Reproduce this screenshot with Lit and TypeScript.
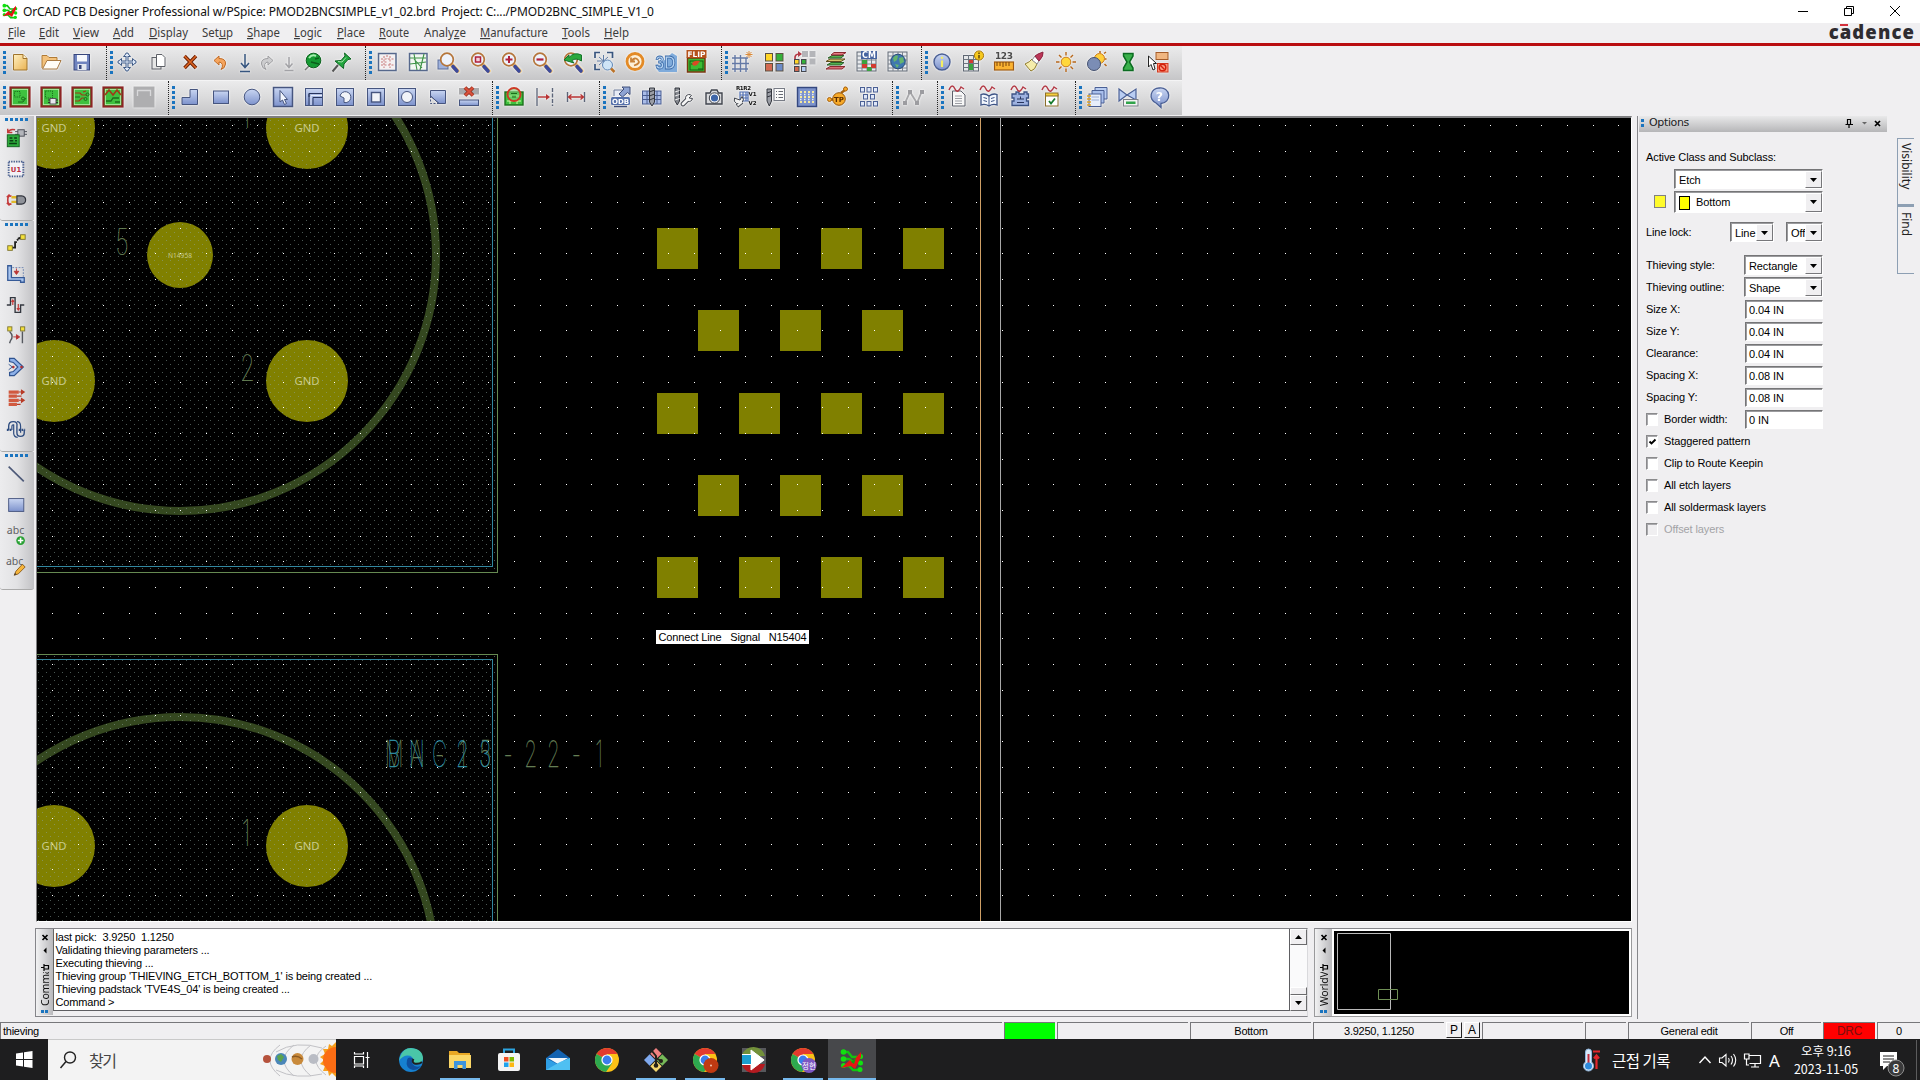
import { LitElement, html, css, svg, SVGTemplateResult } from "lit";
import { customElement } from "lit/decorators.js";

type Frag = SVGTemplateResult;

const lens = (inner: Frag): Frag => svg`
  <path d="M14.5 14.5L20.5 21" stroke="#f6c877" stroke-width="4.4" stroke-linecap="round"/>
  <path d="M16 16.5L20 21" stroke="#3c4a9c" stroke-width="3.6" stroke-linecap="round"/>
  <circle cx="10" cy="9.5" r="6.3" fill="#eef3fc" stroke="#b5763c" stroke-width="1.700"/>
  ${inner}`;
const board = (inner: Frag): Frag => svg`
  <rect x="2.500" y="2.500" width="19" height="19" fill="#3fc13f" stroke="#8c2424" stroke-width="2.200"/>
  <rect x="4.400" y="4.400" width="15.200" height="15.200" fill="none" stroke="#b9ecb0" stroke-width=".8"/>${inner}`;
const wave = svg`<path d="M3 5C5 0 7 0 9 4S13 6 15 2L18 4" fill="none" stroke="#b33a46" stroke-width="1.500"/>`;
const table = svg`<rect x="2" y="2" width="19" height="19" fill="#e9ebee" stroke="#5e6672"/>
  <path d="M2 6H21M2 10H21M2 14H21M2 18H21M7 2V21M12 2V21M16.500 2V21" stroke="#7c848e"/>`;
const chrome = svg`<circle cx="12" cy="12" r="12" fill="#fbc116"/>
  <path d="M12 12L1.600 6A12 12 0 0 1 22.400 6H12Z" fill="#e33b2e"/>
  <path d="M12 12L1.600 6A12 12 0 0 0 11 24L17.200 15Z" fill="#2da94f"/>
  <circle cx="12" cy="12" r="5.600" fill="#fff"/><circle cx="12" cy="12" r="4.400" fill="#3b7ded"/>`;
const orcad = svg`<path d="M3 4H8L12 9H21M3 11H9L13 14H20M3 18H9L13 22H20" fill="none" stroke="#12c312" stroke-width="2.400"/>
  <g fill="#10e210"><circle cx="3.500" cy="4" r="2.800"/><circle cx="3.500" cy="11" r="2.800"/><circle cx="3.500" cy="17.500" r="2.500"/><circle cx="20.500" cy="8.500" r="2.500"/><circle cx="20.500" cy="15" r="2.500"/><circle cx="20" cy="21.500" r="2.500"/></g>
  <path d="M1 20L10 12L12 14L21 4V9L15 21L11 18Z" fill="#e81414"/><path d="M11 14L16 10L14 16Z" fill="#0ca30c"/>`;

const ICONS: Record<string, Frag> = {
  newf: svg`<path d="M5.500 4.500H15L19 8.500V20H5.500Z" fill="url(#gy)" stroke="#a0742c"/><path d="M15 4.500V8.500H19" fill="#fff3d0" stroke="#a0742c"/>`,
  open: svg`<path d="M3 18V5.500H8L10 7.500H18V11" fill="#f3c27c" stroke="#b07a35"/><path d="M3.500 19L8 10.500H22L18 19Z" fill="#fffdf8" stroke="#a87a45"/>`,
  save: svg`<rect x="4" y="4.500" width="15.500" height="15.500" fill="#6f83bf" stroke="#36457b"/><rect x="7" y="5" width="10" height="6.500" fill="#f6f8fc"/><rect x="7.500" y="14" width="9" height="6" fill="#e3e7ef"/><rect x="9" y="15" width="2.500" height="4" fill="#36457b"/>`,
  move: svg`<path d="M12 3V21M3 12H21" stroke="#3e5a86" stroke-width="3"/><path d="M12 2.500L15.500 6.500H8.500ZM12 21.500L8.500 17.500H15.500ZM2.500 12L6.500 8.500V15.500ZM21.500 12L17.500 15.500V8.500Z" fill="#dfe9f8" stroke="#3e5a86"/><path d="M12 5V19M5 12H19" stroke="#dfe9f8"/>`,
  copy: svg`<rect x="5" y="7.500" width="9" height="11.500" fill="#e6e6e6" stroke="#5c5f66"/><path d="M9.500 4.500H15L18 7.500V16.500H9.500Z" fill="#fff" stroke="#5c5f66"/>`,
  del: svg`<path d="M6.500 6L18 18M18 6L6.500 18" stroke="#6b2208" stroke-width="3.600"/><path d="M6.500 6L18 18M18 6L6.500 18" stroke="#dd6320" stroke-width="1.600"/>`,
  undo: svg`<path d="M6 10.500L11 6V8.500Q18 8.500 17.500 14Q17 18.500 13 19.500Q15 17 14.300 14.500Q13.500 12 11 12V15Z" fill="#f5a55e" stroke="#c06a24"/>`,
  down: svg`<path d="M12 4V17M8 13L12 17.500L16 13M7 21.500H17" fill="none" stroke="#36557f" stroke-width="1.500"/>`,
  redo: svg`<path d="M18 10.500L13 6V8.500Q6 8.500 6.500 14Q7 18.500 11 19.500Q9 17 9.700 14.500Q10.500 12 13 12V15Z" fill="#cdcdcf" stroke="#9d9da0"/>`,
  downg: svg`<path d="M12 7V17M8.500 13.500L12 17.500L15.500 13.500M7.500 20.500H16.500" fill="none" stroke="#a2a2a6" stroke-width="1.500"/>`,
  ball: svg`<path d="M8 16L4 20" stroke="#777" stroke-width="1.500"/><circle cx="12.500" cy="10.500" r="7.300" fill="#159a33" stroke="#0a5e1b"/><path d="M8 8Q11 4 15 6" stroke="#a4efae" stroke-width="2" fill="none"/><path d="M10 12L18 14M14 9L18 8" stroke="#0a5e1b" stroke-width="1.500"/>`,
  pin: svg`<path d="M8 15L2.500 21.500" stroke="#555" stroke-width="2"/><path d="M5 11L11 10.500L15 6L14.500 3L21 9L18 9.500L14 14L13.500 18.500Z" fill="#23a63f" stroke="#0b6220"/><path d="M8 11.500L12 12L16 7.500" stroke="#a3e3a9" fill="none"/>`,
  ratsr: svg`<rect x="3.500" y="3.500" width="17.500" height="17" fill="#f4f1f2" stroke="#56688c" stroke-width="1.500"/><path d="M6 9H19M6 15H19M9 6V18M15 6V18M6 12H12M12 5V9" stroke="#c87878" stroke-dasharray="2 1.500"/>`,
  ratsg: svg`<rect x="3.500" y="3.500" width="17.500" height="17" fill="#f2f7f2" stroke="#56688c" stroke-width="1.500"/><path d="M4 8H20M4 14L20 12M8 4L11 20M14 20L18 4M8 9L16 18" stroke="#3e9347" stroke-width="1.100"/>`,
  zwin: svg`<rect x="1" y="10" width="10" height="9" fill="#9fb2dd" stroke="#5a6c99"/>${lens(svg``)}`,
  zrect: lens(svg`<rect x="7.500" y="7" width="5" height="5" fill="#f3d0d8" stroke="#b0203c" stroke-width="1.500"/>`),
  zin: lens(svg`<path d="M10 6V13M6.500 9.500H13.500" stroke="#b0203c" stroke-width="2"/>`),
  zout: lens(svg`<path d="M6.500 9.500H13.500" stroke="#b0203c" stroke-width="2.200"/>`),
  zprev: svg`${lens(svg``)}<path d="M3 10L8 5V7.500Q13 1.500 20.500 5V11Q15 7.500 11 10.500L13 13Z" fill="#2ba83d" stroke="#14732a"/>`,
  zsel: svg`<path d="M3 8V2.500H8M15 2.500H20.500V8M3 14V19.500H8" fill="none" stroke="#38557f" stroke-width="1.700"/><path d="M5 11H18M11.500 5V17M7 7L16 15M16 7L7 15" stroke="#5f7ba5"/><circle cx="15.500" cy="15" r="5" fill="#cfe4f6" stroke="#5f86b5"/><path d="M19 18.500L22.500 22" stroke="#bb7228" stroke-width="2.500"/>`,
  refresh: svg`<circle cx="12" cy="11.500" r="8" fill="#fdf0d8" stroke="#e38a26" stroke-width="2.800"/><path d="M8 7.500V11.500H12M8.500 11Q12 6.500 15 10T11 15.500" fill="none" stroke="#c98238" stroke-width="1.800"/>`,
  d3: svg`<path d="M18 3L23 6V22H5L2 18Z" fill="#7fabdb"/><text x="11.500" y="19" class="t3d" text-anchor="middle" textLength="20" lengthAdjust="spacingAndGlyphs">3D</text>`,
  flip: svg`<rect x="2.500" y="8" width="17.500" height="14" fill="#3cbc32" stroke="#7b3510" stroke-width="1.500"/><rect x="5" y="11" width="13" height="9" fill="none" stroke="#135e13"/><path d="M6 14H11M13 19H18" stroke="#135e13"/><path d="M7 14Q8 10 15 11L12 15L9 16Z" fill="#da4a24"/><rect x="1.500" y="0" width="20" height="8" fill="#b5511a"/><text x="11.500" y="7" class="tiny" fill="#fff" font-size="7.500" text-anchor="middle" textLength="18" lengthAdjust="spacingAndGlyphs">FLIP</text>`,
  grid: svg`<path d="M1 8H17M1 13.500H18M1 19H17M4 5V22M9.500 5V22M15 8V22" stroke="#6378a5" stroke-width="1.400"/><path d="M18 1V8M14.500 4.500H21.500M15.500 2L20.500 7M20.500 2L15.500 7" stroke="#d98a3a"/>`,
  four: svg`<g stroke="#5b5142"><rect x="3.500" y="3.500" width="7" height="7.500" fill="#ffd527"/><rect x="14" y="3.500" width="7" height="7.500" fill="#35b13a"/><rect x="3.500" y="13.500" width="7" height="7.500" fill="#d36a52"/><rect x="14" y="13.500" width="7" height="7.500" fill="#6c8cc8"/></g>`,
  shift: svg`<g fill="#b4b5b9"><rect x="9" y="1" width="6" height="6"/><rect x="16.500" y="1" width="6" height="6"/><rect x="16.500" y="8.500" width="6" height="6"/></g><path d="M2 9Q1.500 4 6 4" stroke="#b33a46" stroke-width="1.700"/><path d="M5 1V7L9 4Z" fill="#b33a46"/><g stroke="#44464d"><rect x="1.500" y="9.500" width="4.500" height="4.500" fill="#ffd527"/><rect x="8.500" y="9.500" width="4.500" height="4.500" fill="#35b13a"/><rect x="1.500" y="16.500" width="4.500" height="5" fill="#d36a52"/><rect x="8.500" y="16.500" width="4.500" height="5" fill="#b4cdf2"/></g>`,
  layers: svg`<path d="M2 19H18L21 16.500H6Z" fill="#d87078" stroke="#8b2930"/><path d="M3 15H17L20 12.500H7Z" fill="#54b24f" stroke="#2a5f2a"/><path d="M2 11.500H17L21 9H6Z" fill="#d8c26a" stroke="#5f4b1e"/><path d="M4 8H17L20 5.500H8Z" fill="#54b24f" stroke="#2a5f2a"/><path d="M7 5H18L22 2.500H10Z" fill="#e87d84" stroke="#8b2930"/>`,
  cm: svg`${table}<rect x="6" y="1" width="16" height="8" fill="#46639f"/><text x="14" y="8" class="tiny" fill="#fff" font-size="8" text-anchor="middle">CM</text><rect x="7" y="10" width="5" height="4" fill="#3aa33e"/><rect x="16" y="14" width="5" height="4" fill="#d23b31"/><rect x="7" y="14" width="5" height="4" fill="#d23b31"/><rect x="12" y="17" width="4.500" height="4" fill="#3aa33e"/>`,
  world: svg`${table}<circle cx="12" cy="11.500" r="7.300" fill="#3f78ae" stroke="#274a78"/><path d="M7 8Q10 4 12 6L11 10L8 12ZM13 8L17 7L18 12L14 14Z" fill="#65b56d"/><path d="M9 14L13 15L11 18Z" fill="#65b56d"/>`,
  info: svg`<circle cx="12" cy="12" r="8" fill="url(#gb)" stroke="#4a5f94" stroke-width="1.400"/><path d="M12 10.500V17M12 6.800V8.800" stroke="#f4ee62" stroke-width="2.200"/>`,
  tinfo: svg`<rect x="2.500" y="5.500" width="15" height="15.500" fill="#e6e8ea" stroke="#5e6672"/><path d="M2.500 9.500H17M2.500 13.500H17M2.500 17.500H17M7.500 5V21M12.500 5V21" stroke="#6d7680"/><rect x="8" y="10" width="4" height="3" fill="#d23b31"/><rect x="8" y="14" width="4" height="6" fill="#3aa33e"/><circle cx="18" cy="5.500" r="4.600" fill="#f6c91f" stroke="#a7770b"/><path d="M18 5V8.500M18 2.500V4" stroke="#5b3f05" stroke-width="1.400"/>`,
  ruler: svg`<text x="12" y="9" class="tiny" fill="#4b4b4b" font-size="9" text-anchor="middle" textLength="18">123</text><rect x="2.500" y="12" width="19" height="8" fill="#fbb331" stroke="#9e5a12" stroke-width="1.200"/><path d="M5 12V16M8 12V16M11 12V17M14 12V16M17 12V16" stroke="#7a430b"/>`,
  brush: svg`<path d="M2 14Q7 12 9 9L14 14Q12 20 8 21Q6 19 2 14Z" fill="#f6ecab" stroke="#8e7a2c"/><path d="M9 10L12 6L16 11L14 14Z" fill="#fff" stroke="#888"/><path d="M12 6Q14 4 20 2Q21 6 16 11Z" fill="#bb3557" stroke="#8c2440"/>`,
  sun: svg`<g stroke="#b7661a" stroke-width="1.400"><path d="M12 2V5.500M12 18.500V22M2 12H5.500M18.500 12H22M5 5L7.500 7.500M16.500 16.500L19 19M5 19L7.500 16.500M16.500 7.500L19 5"/></g><circle cx="12" cy="12" r="4.800" fill="#ffd83c" stroke="#c97a1c"/>`,
  sunsh: svg`<g stroke="#b7661a" stroke-width="1.500"><path d="M15 1V3M21.500 9H19.500M19 3.500L21 2M19.500 14L21.500 16"/></g><circle cx="14.500" cy="8.500" r="5" fill="#ffcf3c" stroke="#c97a1c"/><circle cx="9" cy="14" r="6.500" fill="#7b8db5" stroke="#44506e"/>`,
  hour: svg`<path d="M7.500 3.500H17V6L13.500 12L17 18V20.500H7.500V18L11 12L7.500 6Z" fill="#39b04a" stroke="#0b6b21" stroke-width="1.500"/>`,
  waive: svg`<rect x="9" y="2.500" width="12" height="7" fill="#f0b681" stroke="#a45c2a"/><path d="M1.500 6V17L4 14.500L6 20L8 19L6.500 13.500H9.500Z" fill="#fff" stroke="#222"/><rect x="10.500" y="13.500" width="10.500" height="8.500" fill="#fb9a80" stroke="#d13b21"/><circle cx="15.500" cy="17.500" r="3.300" fill="none" stroke="#d3210d" stroke-width="1.500"/><path d="M13.500 15.500L17.500 19.500" stroke="#d3210d" stroke-width="1.500"/>`,

  b1: board(svg`<rect x="6.500" y="6.500" width="5.500" height="5.500" fill="none" stroke="#1b6e1b" stroke-dasharray="1.200 1"/><path d="M10 17H15L18 13" stroke="#1b6e1b" fill="none"/><circle cx="15" cy="13.500" r="1.500" fill="none" stroke="#1b6e1b"/>`),
  b2: board(svg`<rect x="6.500" y="6" width="7" height="7" fill="none" stroke="#1b6e1b" stroke-dasharray="1.200 1"/><rect x="11" y="13.500" width="6" height="5.500" fill="#e8e8ee" stroke="#555"/><path d="M9 15H11M17 15H19M9 17.500H11M17 17.500H19" stroke="#333"/>`),
  b3: board(svg`<path d="M5 8H10L12 10H17M5 16H9L12 13H14M13 7L16 6" fill="none" stroke="#a03a18" stroke-width="1.200"/><circle cx="17.500" cy="9.500" r="1.500" fill="none" stroke="#1b6e1b"/><circle cx="15.500" cy="14" r="1.500" fill="none" stroke="#1b6e1b"/><path d="M5 12H10" stroke="#1b6e1b"/>`),
  b4: board(svg`<path d="M4 10L8 5L12 10L16 5L20 10" fill="none" stroke="#a03a18" stroke-width="1.600"/><path d="M5 16H10L12 13H18M14 17H19" fill="none" stroke="#1b6e1b" stroke-width="1.300"/>`),
  b5: svg`<rect x="1.500" y="1.500" width="21" height="21" fill="#aeaeb0"/><path d="M5.500 11V5.500H18.500V11" fill="none" stroke="#d9d9db" stroke-width="1.300"/>`,
  sL: svg`<path d="M4 19.500V12.500H12V4.500H19.500V19.500Z" fill="url(#gb)" stroke="#46557f"/>`,
  sRect: svg`<rect x="4.500" y="6" width="15" height="12.500" fill="url(#gb)" stroke="#46557f"/>`,
  sCirc: svg`<circle cx="12" cy="12" r="7.800" fill="url(#gb)" stroke="#46557f"/>`,
  sSel: svg`<rect x="2.500" y="2.500" width="19" height="19" fill="url(#gb)" stroke="#46557f" stroke-width="1.500"/><path d="M9 5.500V17L11.500 15L13.500 19.500L15.500 18.500L13.500 14.500H16.500Z" fill="#f1f5fd" stroke="#46557f"/>`,
  sPath: svg`<rect x="3.500" y="3.500" width="17" height="17" fill="url(#gb)" stroke="#46557f"/><path d="M7 20V8.500H20M11 20V12.500H20M7 12V8.500" fill="none" stroke="#27345c"/><path d="M9 20V10.500H20" fill="none" stroke="#e6ecfa"/>`,
  sPie: svg`<rect x="3.500" y="3.500" width="17" height="17" fill="url(#gb)" stroke="#46557f"/><path d="M7 11A5.500 5.500 0 1 1 11 17.500V13Z" fill="#f1f3f8" stroke="#46557f"/>`,
  sHole: svg`<rect x="3.500" y="3.500" width="17" height="17" fill="url(#gb)" stroke="#46557f"/><rect x="7.500" y="7.500" width="9" height="9.500" fill="#f1f3f8" stroke="#46557f" stroke-width="1.400"/>`,
  sHoleC: svg`<rect x="3.500" y="3.500" width="17" height="17" fill="url(#gb)" stroke="#46557f"/><circle cx="12" cy="12" r="5.500" fill="#f1f3f8" stroke="#46557f"/>`,
  sCut: svg`<path d="M4.500 5.500H19.500V18.500L13 18.500L4.500 11Z" fill="url(#gb)" stroke="#46557f"/><path d="M4.500 11V18.500H13" fill="none" stroke="#46557f" stroke-dasharray="2 1.500"/><path d="M4.500 11L13 18.500" stroke="#46557f"/>`,
  sDel: svg`<rect x="2" y="3" width="20" height="6.500" fill="#aaaaac"/><path d="M8 2.500L16 10.500M16 2.500L8 10.500" stroke="#8c2a1a" stroke-width="3.800"/><path d="M8 2.500L16 10.500M16 2.500L8 10.500" stroke="#d8503a" stroke-width="2.400"/><rect x="2.500" y="15" width="19" height="5.500" fill="url(#gb)" stroke="#46557f"/>`,
  drc: svg`<rect x="3" y="7" width="18" height="13" fill="#3fc13f" stroke="#1b6e1b" stroke-width="1.400"/><path d="M5 11H10M14 11H19M5 16H19M8 14V19M15 14V19" stroke="#d8f5a8"/><circle cx="12" cy="9.500" r="6.500" fill="#7fd078" fill-opacity=".6" stroke="#cc3a26" stroke-width="2"/><path d="M9 8.500H15M10 12H14" stroke="#1b6e1b"/>`,
  dimr: svg`<path d="M4 3V21" stroke="#5b6478" stroke-width="1.300"/><path d="M19.500 3V21" stroke="#5b6478" stroke-width="1.400" stroke-dasharray="4 1.500"/><path d="M5 12H14" stroke="#b83232" stroke-width="1.400"/><path d="M13 9L17 12L13 15Z" fill="#b83232"/>`,
  dim: svg`<path d="M3.500 7V17M20.500 7V17" stroke="#5b6478" stroke-width="1.400"/><path d="M5 12H19M7.500 9.500L4.500 12L7.500 14.500M16.500 9.500L19.500 12L16.500 14.500" fill="none" stroke="#b83232" stroke-width="1.300"/>`,
  odb: svg`<path d="M5 11V5H14V11" fill="#e7ebf5" stroke="#6a7899"/><path d="M10 9L15 4L13 2H21V9.500L18.500 7.500L13.500 12Z" fill="#8fa4d3" stroke="#3d4c78"/><rect x="2" y="12" width="19" height="8" rx="1.500" fill="#5570ab"/><text x="11.500" y="18.800" class="tiny" fill="#fff" font-size="7" text-anchor="middle">ODB</text><path d="M5 21.500H18" stroke="#3d4c78" stroke-width="1.500"/>`,
  drillg: svg`<rect x="2.500" y="6" width="18.500" height="13" fill="#a9bce8" stroke="#4b5f93"/><path d="M2.500 10.500H21M2.500 14.500H21M7 6V19M17 6V19" stroke="#4b5f93"/><path d="M9.500 3H14.500V17L12 21L9.500 17Z" fill="#9b9ea6" stroke="#33363e"/><path d="M9.500 7L14.500 5M9.500 11L14.500 9M9.500 15L14.500 13" stroke="#33363e"/>`,
  drillw: svg`<path d="M4 3H8.500V16L6.300 20L4 16Z" fill="#85888f" stroke="#33363e"/><path d="M4 7L8.500 5.500M4 11L8.500 9.500M4 15L8.500 13.500" stroke="#eee"/><path d="M12 19L17 14" stroke="#43474f" stroke-width="4.600" stroke-linecap="round"/><path d="M20.500 10.500A3.500 3.500 0 1 0 21.500 13.500L18 13Z" fill="#f5f5f5" stroke="#43474f"/><path d="M12 19L17 14" stroke="#f5f5f5" stroke-width="2.800" stroke-linecap="round"/>`,
  cam: svg`<path d="M4 8H8L9.500 5H15L16.500 8H20V19H4Z" fill="#d9dadd" stroke="#3f434c" stroke-width="1.400"/><circle cx="12.500" cy="13" r="4.300" fill="#3f66a8" stroke="#fff" stroke-width="1.400"/><circle cx="12.500" cy="13" r="5.200" fill="none" stroke="#3f434c"/>`,
  r1r2: svg`<path d="M7 7H15V16H7ZM10 7V16M13 7V16M7 10H15M7 13H15" fill="none" stroke="#5271b5" stroke-width="1.200"/><path d="M4 21L9 17" stroke="#43474f" stroke-width="4"/><path d="M1.500 13A4.500 4.500 0 1 0 9 11.500L7 15L4 14Z" fill="#f1f1f1" stroke="#43474f"/><path d="M4.500 20.500L9 17" stroke="#eee" stroke-width="2"/><text class="tiny" fill="#111" x="3" y="4.500" font-size="5.500" textLength="15">R1R2</text><text class="tiny" fill="#111" x="15.500" y="11" font-size="5.500">V1</text><text class="tiny" fill="#111" x="15.500" y="19.500" font-size="5.500">V2</text>`,
  drilll: svg`<path d="M3 4H7.500V16L5.300 21L3 16Z" fill="#9b9ea6" stroke="#33363e"/><path d="M3 8L7.500 6.500M3 12L7.500 10.500" stroke="#33363e"/><rect x="10" y="3.500" width="10.500" height="12" fill="#fbfbfb" stroke="#777b85"/><path d="M12 6.500H13M14.500 6.500H19M12 9.500H13M14.500 9.500H19M12 12.500H13M14.500 12.500H19" stroke="#666a73"/>`,
  dots: svg`<rect x="2.500" y="2.500" width="19" height="19" fill="#7d93cc" stroke="#35487f" stroke-width="1.500"/><path d="M5 7H19M5 12H19M5 17H19" stroke="#f5e9a0" stroke-width="2" stroke-dasharray="2 2"/><path d="M5 9.500H19M5 14.500H19" stroke="#e8eefb" stroke-width="1.500" stroke-dasharray="1.500 2.500"/>`,
  tp: svg`<path d="M3 14.500H8M15 8L19 5L20 2" stroke="#a8620e" stroke-width="2.400" fill="none"/><circle cx="3.500" cy="14.500" r="2" fill="#f7a928" stroke="#a8620e"/><circle cx="19.500" cy="4" r="2" fill="#f7a928" stroke="#a8620e"/><circle cx="13" cy="14" r="6.300" fill="#f7a928" stroke="#8f520b"/><text x="13" y="16.600" class="tiny" font-size="7" text-anchor="middle" fill="#5b2e00">TP</text>`,
  pads: svg`<g fill="#dfe7f8" stroke="#4a5f94"><rect x="3.500" y="2.500" width="4" height="4.500"/><rect x="10" y="2.500" width="4" height="4.500"/><rect x="16.500" y="2.500" width="4" height="4.500"/><rect x="6.500" y="9.500" width="4" height="4.500"/><rect x="13.500" y="9.500" width="4" height="4.500"/><rect x="3.500" y="16.500" width="4" height="4.500"/><rect x="10" y="16.500" width="4" height="4.500"/><rect x="16.500" y="16.500" width="4" height="4.500"/></g>`,
  netg: svg`<path d="M3 18L8 7L15 18L20 6" fill="none" stroke="#a7a7aa" stroke-width="1.800"/><g fill="#9c9ca0"><rect x="1" y="16" width="4" height="4"/><rect x="6" y="5" width="4" height="4"/><rect x="13" y="16" width="4" height="4"/><rect x="18" y="5" width="4" height="4"/></g>`,
  rep1: svg`<path d="M6.500 6H15L19 10V21H6.500Z" fill="#f8f8f8" stroke="#5d616b"/><path d="M9 11H16M9 13.500H16M9 16H16M9 18.500H16" stroke="#9c9ea4"/>${wave}`,
  rep2: svg`<path d="M4 9.500Q8 8 12 11Q16 8 20 9.500V20Q16 18.500 12 21Q8 18.500 4 20Z" fill="#f2f6fd" stroke="#3c5385" stroke-width="1.300"/><path d="M12 11V21M6.500 12.500L10 13.500M6.500 15.500L10 16.500M14 13.500L17.500 12.500M14 16.500L17.500 15.500" stroke="#3c5385"/>${wave}`,
  rep3: svg`<path d="M4 9H8V7H11V9H16V7H19V9H20.500V13H18.500V16H20.500V20.500H4V16H6V13H4Z" fill="#9eb2e0" stroke="#3c5385" stroke-width="1.300"/><path d="M9 14H16M12.500 11.500V14M9 17.500H16" stroke="#27345c"/>${wave}`,
  rep4: svg`<rect x="6.500" y="9.500" width="12.500" height="11.500" fill="#fff" stroke="#8b6f2a"/><rect x="6.500" y="8" width="12.500" height="3" fill="#f5cf3d" stroke="#8b6f2a"/><path d="M10 16L12 18.500L16 13.500" fill="none" stroke="#167a2b" stroke-width="1.800"/>${wave}`,
  books: svg`<path d="M10 2.500H22V14H10Z" fill="#b9cdf2" stroke="#4a5f94"/><path d="M7 5.500H19V18H7Z" fill="#a9bfec" stroke="#4a5f94"/><rect x="4" y="9" width="12" height="12.500" fill="#e7eefb" stroke="#4a5f94"/><path d="M6.500 12H14M6.500 15H14" stroke="#9eafd6"/><path d="M2 11H6M2 14H6M2 17H6M2 20H6" stroke="#e0a325" stroke-width="1.600"/>`,
  bow: svg`<path d="M3 4L11 10L20 4V15L11 10L3 16Z" fill="#b9cdf2" stroke="#4a5f94" stroke-width="1.200"/><rect x="7.500" y="14.500" width="14.500" height="6.500" fill="#f3f3f3" stroke="#7b7e86"/><rect x="10" y="16.500" width="9.500" height="2.500" fill="#31a44a"/>`,
  help: svg`<path d="M12.500 3A8 7.800 0 1 1 14 18.500L14 22.500L9 18A8 7.800 0 0 1 12.500 3Z" fill="url(#gb)" stroke="#4a5f94" stroke-width="1.300"/><text x="12.300" y="15.500" class="tiny" font-size="12.500" text-anchor="middle" fill="#fff">?</text>`,

  l1: svg`<path d="M8 6L3 6V2M3 6Q5 1.500 11 3" fill="none" stroke="#c43a3a" stroke-width="1.600"/><rect x="14" y="3" width="7" height="7" fill="#b3b5bb" stroke="#484b55"/><path d="M11 5H14M11 8H14M21 5H24M21 8H24" stroke="#484b55"/><rect x="2.500" y="8.500" width="13" height="13" fill="#2dab3c" stroke="#135e1f"/><path d="M5 12H8M10 12H13M5 15H9M11 15H13M4.500 18H13" stroke="#0b3f12" stroke-width="1.500"/>`,
  l2: svg`<rect x="5" y="5" width="14" height="14" fill="#f1f1f6"/><rect x="4" y="4" width="16" height="16" fill="none" stroke="#42598c" stroke-width="2" stroke-dasharray="1.400 1.300"/><text x="12" y="15" class="tiny" font-size="7.500" fill="#bb2c3c" text-anchor="middle">U1</text>`,
  l3: svg`<path d="M7 8Q3 6 3 12T7 16M2 9L5 6M2 15L5 18" fill="none" stroke="#c43a3a" stroke-width="1.800"/><path d="M7 9H13M7 14H13" stroke="#e0b82a" stroke-width="2.500"/><path d="M13 7.500H18Q22.500 8 22.500 12T18 16.500H13Z" fill="#8f9299" stroke="#2f323b" stroke-width="1.300"/>`,
  l4: svg`<path d="M6 17H11V11H13M14 7H19" stroke="#222" stroke-width="2" fill="none"/><path d="M13 9L17 6" stroke="#222" stroke-width="2" stroke-dasharray="2 1"/><rect x="3" y="15" width="5" height="5" fill="#f4e13a" stroke="#7d7430"/><rect x="17" y="3" width="5" height="5" fill="#f4e13a" stroke="#7d7430"/>`,
  l5: svg`<path d="M3 3H7V16H21V21H17V19H3Z" fill="#a9c6f0" stroke="#365a97" stroke-width="1.400"/><path d="M8 5H20V15" fill="none" stroke="#6f86b1" stroke-dasharray="2 1.400"/><path d="M12.500 6V9M10 9H15L12.500 12.500Z" fill="#b83232" stroke="#b83232"/>`,
  l6: svg`<path d="M2 12H6V4H11V20H17V12H21" fill="none" stroke="#33373f" stroke-width="1.500"/><path d="M8.500 12V7M7 8.500L8.500 6.500L10 8.500M14.500 11V17M13 15.500L14.500 17.500L16 15.500" stroke="#c43a3a" stroke-width="1.300" fill="none"/>`,
  l7: svg`<path d="M5 7Q10 12 6 17L5 20M19 7V20" fill="none" stroke="#55585f" stroke-width="1.500"/><path d="M9 13H14M12.500 10.500L16 13L12.500 15.500Z" fill="#b83232" stroke="#b83232"/><rect x="3" y="2" width="4.500" height="4.500" fill="#f4e13a" stroke="#7d7430"/><rect x="17" y="2" width="4.500" height="4.500" fill="#f4e13a" stroke="#7d7430"/>`,
  l8: svg`<path d="M5 2.500H10L20 12L10 21.500H5V18L9 17L14 12L9 7L5 6Z" fill="#8db1e9" stroke="#2f5390" stroke-width="1.300"/><circle cx="9" cy="12" r="1.500" fill="#b83232"/><circle cx="18" cy="12" r="1.500" fill="#b83232"/><path d="M4 9L8 12L4 15" stroke="#2f5390" fill="none"/>`,
  l9: svg`<path d="M4 5.500H15M4 10H13M4 14.500H15M4 19H13" stroke="#d1593f" stroke-width="3.600"/><path d="M15 5.500H20M13 10H18M15 14.500H20M13 19H17M18 3.500L21 5.500L18 7.500ZM18 12.500L21 14.500L18 16.500Z" stroke="#b83a26" stroke-width="1.200" fill="#b83a26"/>`,
  l10: svg`<path d="M4 13V9Q4 4 9 4T13 9V16Q13 20 17 20T21 16V13" fill="none" stroke="#2f4d80" stroke-width="1.500"/><path d="M7.500 13V10Q7.500 7 9.500 7.500V17Q10 21 14 21" fill="none" stroke="#2f4d80" stroke-width="1.300"/><path d="M13 4Q17 4 17 9V16" fill="none" stroke="#2f4d80" stroke-width="1.300"/><path d="M2 13H8M15 13H22" stroke="#2f4d80" stroke-width="2.500" stroke-dasharray="2 1"/>`,
  l11: svg`<path d="M4 4L20.500 20" stroke="#4d5978" stroke-width="1.800"/>`,
  l12: svg`<rect x="4" y="5" width="16.500" height="14" fill="url(#gb)" stroke="#46557f"/>`,
  l13: svg`<text x="11.500" y="10" class="abc" text-anchor="middle">abc</text><circle cx="17" cy="17" r="4.700" fill="#28a033"/><path d="M17 14V20M14 17H20" stroke="#fff" stroke-width="1.700"/>`,
  l14: svg`<text x="10.500" y="10" class="abc" text-anchor="middle">abc</text><path d="M10 21L12 16.500L19 9L22 12L14.500 19.500Z" fill="#f6b53a" stroke="#8b5c1c"/><path d="M10 21L11 18.500L12.500 20Z" fill="#333"/>`,
  orcad,
  edge: svg`<circle cx="12" cy="12" r="12" fill="#1680d0"/><path d="M1 9Q4 0 12 0Q24 1 24 11Q23 16 17 15.500Q14 15 14.500 13Q14 7 8 7.500Q3 8 0 13Z" fill="#4ac6a8"/><path d="M8 12Q6 20 14 22Q19 22 22 18Q16 20 13.500 16Q12 13 14 10.500Q9 8 8 12Z" fill="#0f4f9e"/><path d="M14.500 11Q12.500 14 15.500 15.500Q20 16.500 23 14" fill="none" stroke="#1f1f1f" stroke-width="2"/>`,
  folder: svg`<path d="M1 3H9L11 5H22V20H1Z" fill="#e9a825"/><path d="M1 7H23V20H1Z" fill="#fbd767"/><path d="M6 21V13H18V21H14.500V17H9.500V21Z" fill="#3d94dd"/>`,
  store: svg`<path d="M7 6V1.500H17V6" fill="none" stroke="#2ca4e0" stroke-width="2"/><rect x="1" y="5" width="22" height="18" rx="2" fill="#f4f4f4"/><rect x="7" y="9" width="4.500" height="4.500" fill="#ee5024"/><rect x="12.500" y="9" width="4.500" height="4.500" fill="#7fb900"/><rect x="7" y="14.500" width="4.500" height="4.500" fill="#1fa3ed"/><rect x="12.500" y="14.500" width="4.500" height="4.500" fill="#fdb813"/>`,
  mail: svg`<path d="M0 10L12 1L24 10V22H0Z" fill="#1463b0"/><path d="M2 10H22L12 16Z" fill="#f3f8fc"/><path d="M0 10L12 16.500L24 10V22H0Z" fill="#2f9fe5"/><path d="M0 22L14 14L24 10V22Z" fill="#4fc0f2"/>`,
  chrome,
  git: svg`<g transform="rotate(45 12 12)"><rect x="3.500" y="3.500" width="8" height="8" fill="#f08080"/><rect x="12.500" y="3.500" width="8" height="8" fill="#76b958"/><rect x="3.500" y="12.500" width="8" height="8" fill="#7fa9ee"/><rect x="12.500" y="12.500" width="8" height="8" fill="#f5d76e"/></g><path d="M8 3L12 8V17M12 10L17 13" stroke="#242018" stroke-width="2" fill="none"/><circle cx="12" cy="17.500" r="2.300" fill="#242018"/><circle cx="17" cy="13" r="2" fill="#242018"/>`,
  chromer: svg`${chrome}<circle cx="18" cy="17.500" r="7.500" fill="#c03a12"/><circle cx="18" cy="17.500" r="1" fill="#f2c6b4"/>`,
  chromep: svg`${chrome}<circle cx="18" cy="17.500" r="7.500" fill="#7d57c2"/><text x="18" y="20.500" font-family="Noto Sans CJK KR" font-size="7.500" text-anchor="middle" fill="#fff">정현</text>`,
  play: svg`<rect width="24" height="24" fill="#57585c"/><path d="M0 7A12 12 0 0 1 23 8H0Z" fill="#72903a"/><path d="M0 17A12 12 0 0 0 23 16H0Z" fill="#b51a20"/><rect y="7" width="9" height="9" fill="#1b9fd0"/><path d="M0 6.500H9V2L22 12L9 22V16.500H0" fill="none" stroke="#fff"/><path d="M9 2L22.500 12L9 22Z" fill="#fff"/>`,
};

interface Group { w: number; pad: number; items: (string | [string, number])[]; }
const ROW1: Group[] = [
  { w: 106, pad: 4, items: ["newf", "open", "save"] },
  { w: 259, pad: 4, items: [["move", 32], ["copy", 31], ["del", 31], ["undo", 30], ["down", 20], ["redo", 24], ["downg", 20], ["ball", 28], ["pin", 30]] },
  { w: 356, pad: 5.5, items: ["ratsr", "ratsg", "zwin", "zrect", "zin", "zout", "zprev", "zsel", "refresh", "d3", "flip"] },
  { w: 200, pad: 5, items: ["grid", "four", "shift", "layers", "cm", "world"] },
  { w: 261, pad: 4.5, items: ["info", "tinfo", "ruler", "brush", "sun", "sunsh", "hour", "waive"] },
];
const ROW2: Group[] = [
  { w: 168, pad: 4.5, items: ["b1", "b2", "b3", "b4", "b5"] },
  { w: 324, pad: 5.5, items: ["sL", "sRect", "sCirc", "sSel", "sPath", "sPie", "sHole", "sHoleC", "sCut", "sDel"] },
  { w: 107, pad: 5.5, items: ["drc", "dimr", "dim"] },
  { w: 293, pad: 5.5, items: ["odb", "drillg", "drillw", "cam", "r1r2", "drilll", "dots", "tp", "pads"] },
  { w: 45, pad: 5.5, items: ["netg"] },
  { w: 138, pad: 4.5, items: ["rep1", "rep2", "rep3", "rep4"] },
  { w: 107, pad: 5.5, items: ["books", "bow", "help"] },
];
const SIDE: { h: number; items: string[] }[] = [
  { h: 105, items: ["l1", "l2", "l3"] },
  { h: 231, items: ["l4", "l5", "l6", "l7", "l8", "l9", "l10"] },
  { h: 138, items: ["l11", "l12", "l13", "l14"] },
];
// label, index of the mnemonic letter, slot width, text width
const MENU: [string, number, number, number][] = [
  ["File", 0, 31.5, 17.5], ["Edit", 0, 34, 20], ["View", 0, 40, 26], ["Add", 0, 36, 21], ["Display", 0, 53, 39],
  ["Setup", 3, 45, 31], ["Shape", 0, 47, 33], ["Logic", 0, 43, 28], ["Place", 0, 42, 28], ["Route", 0, 45, 30],
  ["Analyze", 5, 56, 42], ["Manufacture", 0, 82, 68], ["Tools", 0, 42, 28], ["Help", 0, 40, 25],
];
const LOG = [
  "last pick:  3.9250  1.1250", "Validating thieving parameters ...", "Executing thieving ...",
  "Thieving group 'THIEVING_ETCH_BOTTOM_1' is being created ...", "Thieving padstack 'TVE4S_04' is being created ...", "Command >",
];
const CHECKS: [string, boolean, boolean][] = [
  ["Staggered pattern", true, false], ["Clip to Route Keepin", false, false], ["All etch layers", false, false],
  ["All soldermask layers", false, false], ["Offset layers", false, true],
];
const TASKS: [string, boolean][] = [
  ["edge", false], ["folder", true], ["store", false], ["mail", false], ["chrome", false],
  ["git", true], ["chromer", true], ["play", false], ["chromep", true],
];

function gridPath(): string {
  let d = "";
  for (let y = 125; y < 921; y += 25.67)
    for (let x = 51.9; x < 1630; x += 25.68) d += `M${Math.round(x)} ${Math.round(y)}h1v1h-1z`;
  return d;
}
const GRID = gridPath();
const cells = (n: number) => Array.from({ length: n }, (_, i) => (i * 22.8) / 0.58).join(" ");

@customElement("app-root")
export class AppRoot extends LitElement {
  static styles = css`
    :host { display: block; width: 1920px; height: 1080px; overflow: hidden; background: #f0eff1; color: #000;
      font-family: "Liberation Sans", sans-serif; font-size: 11px; }
    * { box-sizing: border-box; }
    svg { display: block; overflow: visible; fill: none; }
    .defs { position: absolute; width: 0; height: 0; }
    .root { display: flex; flex-direction: column; width: 1920px; height: 1080px; }
    .tiny { font-family: "DejaVu Sans", sans-serif; font-weight: bold; }
    .abc { font: 11.5px "Noto Sans", sans-serif; fill: #5f5f63; }
    .t3d { font: bold 19px "Liberation Sans", sans-serif; fill: #b4d2f1; stroke: #3a6aa8; stroke-width: .9; }

    .title { height: 23px; background: #fff; display: flex; align-items: center; padding: 0 18px 1px 2px; flex: none; }
    .title .cap { margin-left: 5px; flex: 1; font: 12px "Noto Sans", sans-serif; white-space: pre; color: #111; letter-spacing: -0.12px; }
    .winbtns { display: flex; gap: 34px; padding-right: 1px; }
    .menu { height: 20px; display: flex; align-items: center; padding: 0 0 2px 7.5px; flex: none; color: #3c3c3c; font: 12px "Noto Sans", sans-serif; }
    .logo { margin-left: auto; margin-right: 5px; display: flex; position: relative; font: 800 18.500px "Open Sans", sans-serif; line-height: 18px; letter-spacing: 1.1px; color: #2e2c30; }
    .logo i { position: absolute; left: 11.500px; top: 1px; width: 8px; height: 2px; background: #d3303c; }
    .redline { height: 3px; background: #b90d10; flex: none; }
    .bars { height: 70px; flex: none; background: #f0eff1; }
    .bar { height: 34px; width: 1182px; display: flex; background: linear-gradient(#ebebec, #dcdcdd 45%, #c6c6c8); }
    .bar.two { height: 35px; border-top: 1px solid #f4f4f5; }
    .grp { display: flex; align-items: center; position: relative; padding-bottom: 2px; }
    .grp + .grp { border-left: 1px dotted #222; }
    .grip { position: absolute; left: 3px; top: 5px; width: 3px; height: 24px; background: repeating-linear-gradient(#1a74bf 0 3px, transparent 3px 5px); }
    .slot { width: 31px; display: flex; justify-content: center; flex: none; }
    .slot svg { filter: drop-shadow(0 0 1px #fff); }

    .main { height: 906px; flex: none; display: flex; }
    .left { width: 1637px; display: flex; flex-direction: column; }
    .top { height: 806px; display: flex; }
    .side { width: 34px; display: flex; flex-direction: column; }
    .sec { position: relative; width: 34px; padding-top: 6px; border-bottom: 1px solid #aaa; background: linear-gradient(90deg, #ececee, #e2e2e4 50%, #c2c2c5); border-radius: 0 0 3px 3px; }
    .sec .row { height: 31px; display: flex; align-items: center; justify-content: center; padding-right: 3px; }
    .hgrip { position: absolute; left: 5px; top: 2px; width: 23px; height: 3px; background: repeating-linear-gradient(90deg, #1a74bf 0 3px, transparent 3px 5px); }
    .canvas { margin-left: 2px; width: 1596px; height: 806px; border: 1px solid #7e7e80; border-top-width: 2px; border-right-color: #fff; border-bottom-color: #fff; background: #000; overflow: hidden; }
    .canvas svg { overflow: hidden; }
    .gnd { font: 11.500px "Noto Sans", sans-serif; fill: #c9cb8c; }
    .small { font-size: 7px; }
    .vec { font-family: "Inter", "Noto Sans", sans-serif; font-weight: 100; font-size: 36px; fill: #6d875c; stroke: #6d875c; stroke-width: .25; }
    .cy { fill: #2f93a8; stroke: #2f93a8; }
    .tip { font: 11px "Liberation Sans", sans-serif; fill: #000; white-space: pre; }

    .dock { height: 89px; margin-top: 6px; display: flex; padding-left: 35px; }
    .cmd { width: 1273px; border: 1px solid #85858a; border-right-color: #d9d9dc; display: flex; padding-bottom: 5px; }
    .strip { width: 17px; margin-bottom: -4px; background: linear-gradient(90deg, #f2f2f3, #b9b9bc); display: flex; flex-direction: column; align-items: center; padding-top: 5px; }
    .strip .vt { margin-top: 0; height: 34px; overflow: hidden; writing-mode: vertical-rl; transform: rotate(180deg); font: 10.500px "Noto Sans", sans-serif; letter-spacing: -0.2px; line-height: 14px; color: #111; white-space: nowrap; }
    .strip .bd { width: 7px; height: 3px; margin-top: 4px; background: linear-gradient(90deg, #1a74bf 3px, transparent 3px 4px, #1a74bf 4px); }
    .log { flex: 1; background: #fff; border-left: 1px solid #666; border-bottom: 1px solid #5e5e62; border-right: 1px solid #5e5e62; padding: 1.500px 0 0 1.500px; white-space: pre; }
    .log div { height: 13.050px; line-height: 13px; letter-spacing: -0.16px; }
    .sb { width: 17px; background: #fafafb; display: flex; flex-direction: column; }
    .sb b { display: flex; align-items: center; justify-content: center; height: 16px; background: #f0eff1; border: 1px solid #fff; border-right-color: #6a6a6c; border-bottom-color: #6a6a6c; }
    .sb b.th { height: 8px; margin-top: auto; }
    .wv { margin-left: 6px; width: 318px; border: 1px solid #9a9a9c; border-top-color: #85858a; display: flex; }
    .wv .strip { margin-bottom: 0; }
    .world { flex: 1; background: #000; border: 2px solid #fff; }

    .right { width: 283px; display: flex; }
    .opt { width: 251px; height: 903px; border-left: 1px solid #86868a; }
    .ohead { height: 16px; width: 248px; margin-left: 1px; background: linear-gradient(#e9e9ea, #b6b6b8); display: flex; align-items: center; font: 11px "DejaVu Sans", sans-serif; letter-spacing: -0.35px; padding: 0 0 3px 2px; color: #222; }
    .ohead .bd { width: 3px; height: 8px; margin-right: 5px; background: linear-gradient(#1a74bf 3px, transparent 3px 5px, #1a74bf 5px); }
    .ohead svg { margin-left: auto; margin-right: 4px; }
    .form { padding: 14px 0 0 8px; width: 185px; }
    .f { display: flex; align-items: center; height: 22px; white-space: nowrap; letter-spacing: -0.1px; }
    .f.tall { height: 23px; }
    .f.lock { margin: 8px 0 11px; }
    .f .lab { flex: 1; }
    .combo { height: 20px; background: #fff; border: 1px solid; border-color: #757577 #fff #fff #757577; box-shadow: inset 1px 1px #9b9b9e; display: flex; align-items: center; padding: 1px 0 0 4px; flex: none; overflow: hidden; }
    .tall .combo { height: 22px; }
    .combo .cv { flex: 1; overflow: hidden; display: flex; align-items: center; }
    .combo b { width: 17px; align-self: stretch; background: #f0eff1; border: 1px solid #fff; border-right-color: #77777a; border-bottom-color: #77777a; display: flex; align-items: center; justify-content: center; }
    .inp { width: 78px; height: 19px; background: #fff; border: 1px solid; border-color: #757577 #fff #fff #757577; box-shadow: inset 1px 1px #9b9b9e; padding: 2px 0 0 3px; line-height: 15px; letter-spacing: -0.1px; }
    .sw { width: 11px; height: 14px; background: #ff0; border: 1px solid #000; margin: 2px 6px 0 0; }
    .cbx { width: 12px; height: 13px; margin-right: 6px; background: #fff; border: 1px solid #8a8a8c; border-right-color: #fff; border-bottom-color: #fff; box-shadow: inset 1px 1px #a9a9ac; flex: none; }
    .dis { color: #a3a3a6; }
    .dis .cbx { background: #f0eff1; }
    .w149 { width: 149px; } .w44 { width: 44px; } .w37 { width: 37px; } .w79 { width: 79px; }
    .gap12 { margin-left: 12px; }
    .mlauto { margin-left: auto; }
    .ychip { width: 12px; height: 13px; background: #fffb2b; border: 1px solid #808083; margin: 0 auto 0 8px; }
    .tabs { margin: 22px 0 0 9px; width: 19px; }
    .tab { height: 67px; border: 1px solid #8d9fb3; border-right: none; writing-mode: vertical-rl; padding-top: 4px; font: 12px "Noto Sans", sans-serif; line-height: 16px; color: #222; letter-spacing: 0; }
    .tab + .tab { border-top-width: 2px; height: 69px; padding-top: 5px; }

    .status { height: 17px; flex: none; display: flex; gap: 2px; background: #f0eff1; }
    .status > div { height: 17px; border-top: 1px solid #77777a; border-left: 1px solid #77777a; text-align: center; line-height: 16px; letter-spacing: -0.25px; }
    .status .pa { border: 1px solid #fff; border-right-color: #222; border-bottom-color: #222; line-height: 14px; height: 16px; font-size: 12px; }
    .status .busy { background: #0f0; }
    .status .drc { background: #f00; color: #7b0d0d; font-size: 12px; }
    .status .msg { text-align: left; padding-left: 2px; }

    .task { height: 41px; flex: none; background: #1e1e1f; display: flex; color: #fff; }
    .start { width: 48px; display: flex; align-items: center; justify-content: center; }
    .search { width: 288px; background: #f3f3f3; border-top: 1px solid #c9c9c9; color: #454545; display: flex; align-items: center; padding-left: 12px; font: 16px "Noto Sans CJK KR", sans-serif; overflow: hidden; }
    .search span { margin-left: 12px; letter-spacing: -1.4px; flex: 1; }
    .ti { width: 49.100px; display: flex; align-items: center; justify-content: center; position: relative; }
    .ti.view { width: 50px; padding-left: 0; }
    .ti.on::after { content: ""; position: absolute; left: 4.500px; right: 4.500px; bottom: 0; height: 2px; background: #76b9ed; }
    .ti.act { width: 48px; background: #47484b; }
    .ti.act::after { left: 0; right: 0; }
    .tray { margin-left: auto; display: flex; align-items: center; font: 15.500px "Noto Sans CJK KR", sans-serif; }
    .wth { margin-left: 11px; width: 87px; letter-spacing: -0.5px; }
    .clk { width: 86px; margin-left: 3px; text-align: center; font-size: 12.500px; line-height: 18px; letter-spacing: 0; padding-right: 2px; }
  `;

  private icon(name: string, size = 24) {
    return html`<svg width=${size} height=${size} viewBox="0 0 24 24">${ICONS[name]}</svg>`;
  }

  private bar(groups: Group[], two: boolean) {
    return html`<div class=${two ? "bar two" : "bar"}>
      ${groups.map(g => html`<div class="grp" style="width:${g.w}px;padding-left:${g.pad}px"><span class="grip"></span>
        ${g.items.map(i => Array.isArray(i)
          ? html`<span class="slot" style="width:${i[1]}px">${this.icon(i[0])}</span>`
          : html`<span class="slot">${this.icon(i)}</span>`)}</div>`)}
    </div>`;
  }

  private arrow() {
    return html`<svg width="7" height="4" viewBox="0 0 7 4"><path d="M0 0H7L3.500 4Z" fill="#000"/></svg>`;
  }

  private combo(cls: string, value: unknown) {
    return html`<div class="combo ${cls}"><span class="cv">${value}</span><b>${this.arrow()}</b></div>`;
  }

  private canvas() {
    const sq: Frag[] = [];
    for (let r = 0; r < 5; r++) {
      const odd = r % 2;
      for (let c = 0; c < (odd ? 3 : 4); c++)
        sq.push(svg`<rect x=${Math.round(657 + odd * 41 + c * 82)} y=${Math.round(228 + r * 82.3)} width="41" height="41" fill="#808000"/>`);
    }
    const pads = [[54, 128], [307, 128], [54, 381], [307, 381], [54, 846], [307, 846]];
    return html`<div class="canvas"><svg width="1594" height="803" viewBox="37 118 1594 803">
      <g fill="#808000">${pads.map(p => svg`<circle cx=${p[0]} cy=${p[1]} r="41"/>`)}<circle cx="180" cy="255" r="33"/></g>
      <g stroke="#34471f" stroke-width="8"><circle cx="180" cy="255" r="256"/><circle cx="180" cy="973" r="256"/></g>
      <rect x="36" y="118" width="461" height="454" fill="url(#hatch)"/>
      <rect x="36" y="655" width="461" height="266" fill="url(#hatch)"/>
      <g shape-rendering="crispEdges">
        <path d="M497.500 118V572.500H36M36 654.500H497.500V921" stroke="#668a52"/>
        <path d="M492.500 118V566.500H36M36 659.500H492.500V921" stroke="#3187a0"/>
        ${sq}
        <path d="M980.500 118V921" stroke="#cf9f66"/><path d="M1000.500 118V921" stroke="#a8a8a8"/>
        <path d=${GRID} fill="#fff"/>
      </g>
      ${pads.map(p => svg`<text class="gnd" x=${p[0]} y=${p[1] + 4} text-anchor="middle" textLength="25" lengthAdjust="spacingAndGlyphs">GND</text>`)}
      <text class="gnd small" x="180" y="257.500" text-anchor="middle" textLength="24" lengthAdjust="spacingAndGlyphs">N14958</text>
      <text class="vec" transform="translate(122 254.500) scale(.65 1)" text-anchor="middle">5</text>
      <text class="vec" transform="translate(247.500 380.500) scale(.65 1)" text-anchor="middle">2</text>
      <text class="vec" transform="translate(246 128) scale(.65 1)" text-anchor="middle">1</text>
      <text class="vec" transform="translate(246 846) scale(.65 1)" text-anchor="middle">1</text>
      <text class="vec" transform="translate(394 767) scale(.58 1)" text-anchor="middle" x=${cells(10)}>MA-15-22-1</text>
      <text class="vec cy" transform="translate(394 767) scale(.58 1)" text-anchor="middle" x=${cells(5)}>BNC23</text>
      <rect x="656" y="630" width="153" height="14" fill="#fff"/>
      <text x="658.500" y="641" class="tip" textLength="148">Connect Line   Signal   N15404</text>
    </svg></div>`;
  }

  private strip(t: string) {
    return html`<div class="strip">
      <svg width="8" height="38" viewBox="0 0 8 38"><path d="M1.500 1L6.500 6M6.500 1L1.500 6" stroke="#000" stroke-width="1.700"/><path d="M5.500 13.500V19.500L2.500 16.500Z" fill="#000"/><path d="M0 33.500H3M3 30V37M3 31.500H7.500V35H3" stroke="#000" stroke-width="1.200"/></svg>
      <div class="vt">${t}</div><div class="bd"></div></div>`;
  }

  render() {
    return html`
      <svg class="defs"><defs>
        <linearGradient id="gb" x1="0" y1="0" x2="0" y2="1"><stop offset="0" stop-color="#c9d6f2"/><stop offset="1" stop-color="#7d92cc"/></linearGradient>
        <linearGradient id="gy" x1="0" y1="0" x2="1" y2="1"><stop offset="0" stop-color="#fff0c0"/><stop offset="1" stop-color="#eab353"/></linearGradient>
        <pattern id="hatch" width="8" height="8" x="37" y="119" patternUnits="userSpaceOnUse"><path d="M1 1h1v1h-1zM5 5h1v1h-1z" fill="#8fa8a0" fill-opacity=".52"/></pattern>
      </defs></svg>
      <div class="root">
        <div class="title">${this.icon("orcad", 16)}<span class="cap">OrCAD PCB Designer Professional w/PSpice: PMOD2BNCSIMPLE_v1_02.brd  Project: C:.../PMOD2BNC_SIMPLE_V1_0</span>
          <span class="winbtns">
            <svg width="12" height="12"><path d="M1 6.500H11" stroke="#000"/></svg>
            <svg width="12" height="12"><path d="M1.500 3.500H8.500V10.500H1.500ZM3.500 3.500V1.500H10.500V8.500H8.500" stroke="#000"/></svg>
            <svg width="12" height="12"><path d="M1 1L11 11M11 1L1 11" stroke="#000"/></svg>
          </span></div>
        <div class="menu">
          ${MENU.map(([t, u, w, tw]) => html`<svg width=${w} height="18"><text x="0" y="14" textLength=${tw} lengthAdjust="spacingAndGlyphs" fill="#3c3c3c">${t.slice(0, u)}<tspan text-decoration="underline">${t[u]}</tspan>${t.slice(u + 1)}</text></svg>`)}
          <span class="logo">cadence<i></i></span>
        </div>
        <div class="redline"></div>
        <div class="bars">${this.bar(ROW1, false)}${this.bar(ROW2, true)}</div>
        <div class="main">
          <div class="left">
            <div class="top">
              <div class="side">${SIDE.map(s => html`<div class="sec" style="height:${s.h}px"><span class="hgrip"></span>${s.items.map(i => html`<div class="row">${this.icon(i, 22)}</div>`)}</div>`)}</div>
              ${this.canvas()}
            </div>
            <div class="dock">
              <div class="cmd">${this.strip("Command")}
                <div class="log">${LOG.map(l => html`<div>${l}</div>`)}</div>
                <div class="sb"><b><svg width="7" height="4"><path d="M0 4H7L3.500 0Z" fill="#000"/></svg></b><b class="th"></b><b>${this.arrow()}</b></div>
              </div>
              <div class="wv">${this.strip("WorldView")}
                <div class="world"><svg width="295" height="83"><path d="M3.500 2.500H56.500V78.500H3.500Z" stroke="#b9b9b9"/><path d="M44.500 58.500H63.500V68.500H44.500Z" stroke="#6f8f55"/></svg></div>
              </div>
            </div>
          </div>
          <div class="right">
            <div class="opt">
              <div class="ohead"><span class="bd"></span>Options<svg width="38" height="12"><path d="M2.500 7.500V2.500H5.500V7.500M0.500 7.500H8M4 7.500V11" stroke="#000" stroke-width="1.200"/><path d="M17 5H22L19.500 7.500Z" fill="#666"/><path d="M30 4L35 9M35 4L30 9" stroke="#000" stroke-width="1.700"/></svg></div>
              <div class="form">
                <div class="f">Active Class and Subclass:</div>
                <div class="f">${this.combo("w149 mlauto", "Etch")}</div>
                <div class="f tall"><span class="ychip"></span>${this.combo("w149", html`<i class="sw"></i>Bottom`)}</div>
                <div class="f lock"><span class="lab">Line lock:</span>${this.combo("w44", "Line")}<span class="gap12"></span>${this.combo("w37", "Off")}</div>
                <div class="f"><span class="lab">Thieving style:</span>${this.combo("w79", "Rectangle")}</div>
                <div class="f"><span class="lab">Thieving outline:</span>${this.combo("w79", "Shape")}</div>
                ${[["Size X:", "0.04 IN"], ["Size Y:", "0.04 IN"], ["Clearance:", "0.04 IN"], ["Spacing X:", "0.08 IN"], ["Spacing Y:", "0.08 IN"]].map(([a, b]) => html`<div class="f"><span class="lab">${a}</span><div class="inp">${b}</div></div>`)}
                <div class="f"><i class="cbx"></i><span class="lab">Border width:</span><div class="inp">0 IN</div></div>
                ${CHECKS.map(([t, on, dis]) => html`<div class=${dis ? "f dis" : "f"}><i class="cbx">${on ? html`<svg width="10" height="11"><path d="M2.500 5.500L4.500 7.500L8.500 3.500" stroke="#000" stroke-width="1.900"/></svg>` : ""}</i>${t}</div>`)}
              </div>
            </div>
            <div class="tabs"><div class="tab">Visibility</div><div class="tab">Find</div></div>
          </div>
        </div>
        <div class="status">
          <div class="msg" style="width:1002px">thieving</div><div class="busy" style="width:51px"></div>
          <div style="width:131px"></div><div style="width:121px">Bottom</div><div style="width:131px">3.9250, 1.1250</div>
          <div class="pa" style="width:16px">P</div><div class="pa" style="width:16px">A</div>
          <div style="width:101px"></div><div style="width:41px"></div><div style="width:121px">General edit</div>
          <div style="width:70px">Off</div><div class="drc" style="width:52px">DRC</div><div style="flex:1">0</div>
        </div>
        <div class="task">
          <div class="start"><svg width="17" height="17"><path d="M0 2.500L7 1.500V8H0ZM8 1.300L16.500 0V8H8ZM0 9H7V15.500L0 14.500ZM8 9H16.500V17L8 15.700Z" fill="#fff"/></svg></div>
          <div class="search"><svg width="17" height="18"><circle cx="10" cy="6.500" r="5.500" stroke="#222" stroke-width="1.400"/><path d="M6 10.500L0.500 17" stroke="#222" stroke-width="1.500"/></svg><span>찾기</span>
            <svg width="80" height="40"><g stroke="#c2c2c6"><path d="M24 5Q4 20 24 36M38 5Q18 20 38 36M55 5Q35 20 55 36M70 6Q50 20 70 35M20 12Q40 0 66 8M20 30Q40 40 66 34"/></g>
              <circle cx="11" cy="19" r="4" fill="#b5523c"/><circle cx="25" cy="19" r="6" fill="#4a86b8"/><path d="M21 16L25 14L28 17L25 22L22 20Z" fill="#5ca34c"/><circle cx="41.500" cy="19" r="6" fill="#c98a3b"/><path d="M36 17Q41 15 46 19" stroke="#8c5a22" stroke-width="1.500"/><circle cx="57.500" cy="19" r="5" fill="#b9bcc4"/>
              <path d="M80 2L76 6L73 4L72 9L67 9L69 14L64 17L68 20L64 24L69 26L67 31L72 31L73 36L76 33L80 37Z" fill="#f7a01c"/><path d="M80 7A13 13 0 0 0 80 33Z" fill="#fb6d14"/></svg></div>
          <div class="ti view"><svg width="17" height="16"><path d="M1.500 4.500H10.500V12H1.500ZM1.500 2.500V0M10.500 2.500V0M1.500 2H10.500M1.500 16V14H10.500V16M14.500 0V16M12.500 5.500H16.500" stroke="#fff" stroke-width="1.200"/></svg></div>
          ${TASKS.map(([n, on]) => html`<div class=${on ? "ti on" : "ti"}>${this.icon(n)}</div>`)}
          <div class="ti on act">${this.icon("orcad", 24)}</div>
          <div class="tray">
            <svg width="19" height="24"><path d="M3.500 4A3 3 0 0 1 9.500 4V14A5 5 0 1 1 3.500 14Z" fill="#d9e9f7" stroke="#8fb6dd"/><path d="M6.500 6V17" stroke="#c22c3c" stroke-width="2"/><circle cx="6.500" cy="18" r="3.500" fill="#2d8bdc"/><path d="M11 3.500H18M14.500 21V8M12 10.500L14.500 7.500L17 10.500" stroke="#e2262c" stroke-width="2.200"/></svg>
            <span class="wth">근접 기록</span>
            <svg width="82" height="20"><path d="M0.500 13L6 7L11.500 13" stroke="#fff" stroke-width="1.400"/><path d="M20.500 8H23L27 4.500V16L23 12.500H20.500ZM29.500 8Q31 10 29.500 12.500M32 6Q35 10 32 14.500M34.500 4Q39 10 34.500 16.500" stroke="#fff" stroke-width="1.100"/><path d="M50.500 5.500H61.500V13.500H50.500M56 13.500V17M52 17H60M45.500 4H50V9H45.500ZM47.500 9V15H50" stroke="#fff" stroke-width="1.200"/><text x="70" y="16.500" font-family="Noto Sans" font-size="17" fill="#fff">A</text></svg>
            <div class="clk">오후 9:16<br>2023-11-05</div>
            <svg width="50" height="40"><path d="M10 12H27V26H17L13 30V26H10Z" fill="#fff"/><path d="M13 16H24M13 19H24M13 22H20" stroke="#1e1e1f"/><circle cx="26" cy="28" r="8" fill="#3a3a3b" stroke="#8e8e8e"/><text x="26" y="32.500" font-family="Noto Sans" font-size="12" fill="#fff" text-anchor="middle">8</text><path d="M46.500 0V40" stroke="#5c5c5d"/></svg>
          </div>
        </div>
      </div>`;
  }
}
